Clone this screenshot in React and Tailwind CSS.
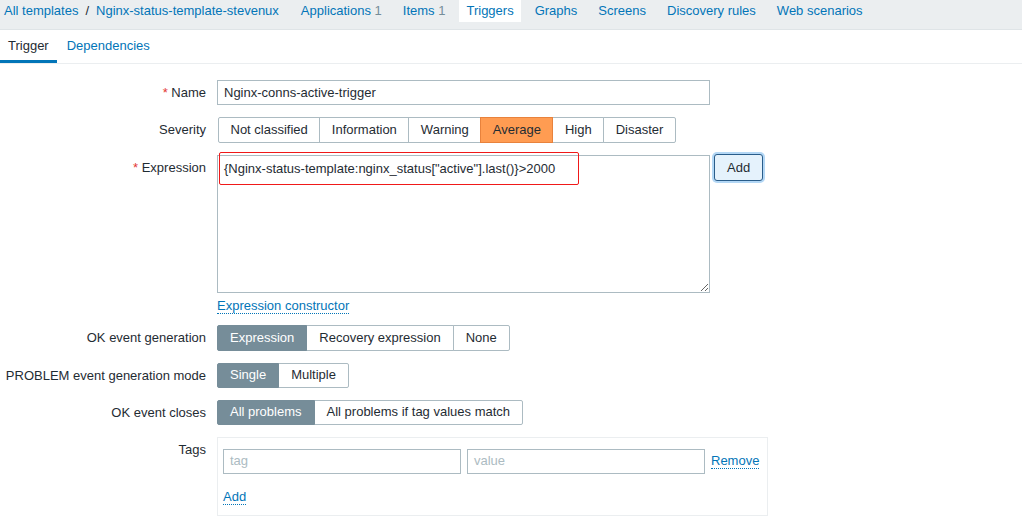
import React from "react";

const blue = "text-[#0275b8]";

function Radio({ items, selected, h = "h-[26px]", special, px = "px-[12px]" }) {
  return (
    <div className={`flex ${h}`}>
      {items.map((it, i) => {
        const sel = i === selected;
        const first = i === 0;
        const last = i === items.length - 1;
        let cls = "";
        if (sel && special) cls = "bg-[#ff9c52] border-[#e8823c] text-[#1f2c33]";
        else if (sel) cls = "bg-[#768d99] border-[#768d99] text-white";
        else cls = "bg-white border-[#acbbc2] text-[#1f2c33]";
        return (
          <div
            key={it}
            className={`flex items-center ${px} border ${cls} ${first ? "rounded-l-[2px]" : "-ml-px"} ${last ? "rounded-r-[2px]" : ""} ${sel ? "relative z-10" : ""}`}
          >
            {it}
          </div>
        );
      })}
    </div>
  );
}

function Row({ label, required, children, className = "" }) {
  return (
    <div className={`flex items-start ${className}`}>
      <div className="w-[217px] pr-[11px] text-right pt-[5px] leading-[15px] shrink-0">
        {required && <span className="text-[#e33734]">* </span>}
        {label}
      </div>
      <div>{children}</div>
    </div>
  );
}

export default function App() {
  return (
    <div className="w-[1022px] h-[517px] overflow-hidden bg-white font-['Liberation_Sans',Arial,sans-serif] text-[13px] text-[#1f2c33]">
      {/* top bar */}
      <div className="h-[30px] bg-[#ebeef0] border-b border-[#dfe4e7] flex items-start pl-[4px] leading-[22px]">
        <span className={blue}>All templates</span>
        <span className="mx-[7px] text-[#1f2c33]">/</span>
        <span className={blue}>Nginx-status-template-stevenux</span>
        <div className="flex ml-[15px] gap-[7px]">
          <div className={`px-[7px] ${blue}`}>
            Applications <span className="text-[#768d99]">1</span>
          </div>
          <div className={`px-[7px] ${blue}`}>
            Items <span className="text-[#768d99]">1</span>
          </div>
          <div className={`px-[7px] bg-white h-[22px] ${blue}`}>Triggers</div>
          <div className={`px-[7px] ${blue}`}>Graphs</div>
          <div className={`px-[7px] ${blue}`}>Screens</div>
          <div className={`px-[7px] ${blue}`}>Discovery rules</div>
          <div className={`px-[7px] ${blue}`}>Web scenarios</div>
        </div>
      </div>

      {/* sub tabs */}
      <div className="h-[34px] border-b border-[#ebeef0] flex">
        <div className="h-[33px] flex items-center px-[8px] border-b-[3px] border-[#0275b8] pt-[2px]">
          Trigger
        </div>
        <div className={`h-[33px] flex items-center px-[10px] border-b-[3px] border-transparent pt-[2px] ${blue}`}>
          Dependencies
        </div>
      </div>

      {/* form */}
      <div className="pt-[16px]">
        <Row label="Name" required>
          <div className="w-[493px] h-[25px] border border-[#acbbc2] flex items-center px-[6px]">
            Nginx-conns-active-trigger
          </div>
        </Row>

        <Row label="Severity" className="mt-[12px]">
          <div className="pl-[1px]">
            <Radio
              items={["Not classified", "Information", "Warning", "Average", "High", "Disaster"]}
              selected={3}
              special
              px="px-[11.5px]"
            />
          </div>
        </Row>

        <Row label="Expression" required className="mt-[12px]">
          <div className="flex items-start">
            <div className="relative">
              <textarea
                readOnly
                value={'{Nginx-status-template:nginx_status["active"].last()}>2000'}
                className="block w-[493px] h-[138px] border border-[#acbbc2] px-[6px] pt-[5px] text-[13px] leading-[16px] text-[#1f2c33] outline-none font-['Liberation_Sans',Arial,sans-serif]"
              />
              <div className="absolute left-[2px] top-[-3px] w-[360px] h-[33px] border-[1.5px] border-[#f01919] rounded-[2px] pointer-events-none" />
            </div>
            <div className="ml-[4px] -mt-[1px] h-[27px] px-[12px] flex items-center border border-[#2a5d8a] bg-[#e5f2fc] rounded-[3px] ring-2 ring-[#b3d7f5]">
              Add
            </div>
          </div>
          <div className="mt-[3px]">
            <span className={`${blue} leading-[14px] border-b border-dotted border-[#0275b8] inline-block`}>
              Expression constructor
            </span>
          </div>
        </Row>

        <Row label="OK event generation" className="mt-[9px]">
          <Radio items={["Expression", "Recovery expression", "None"]} selected={0} />
        </Row>

        <Row label="PROBLEM event generation mode" className="mt-[12px]">
          <Radio items={["Single", "Multiple"]} selected={0} h="h-[25px]" />
        </Row>

        <Row label="OK event closes" className="mt-[12px]">
          <Radio items={["All problems", "All problems if tag values match"]} selected={0} h="h-[25px]" />
        </Row>

        <Row label="Tags" className="mt-[12px]">
          <div className="w-[551px] h-[79px] border border-[#ebeef0] pl-[5px] pt-[11px]">
            <div className="flex items-center">
              <div className="w-[238px] h-[25px] border border-[#acbbc2] flex items-center px-[6px] text-[#acbbc2]">
                tag
              </div>
              <div className="ml-[6px] w-[238px] h-[25px] border border-[#acbbc2] flex items-center px-[6px] text-[#acbbc2]">
                value
              </div>
              <span className={`ml-[6px] ${blue} leading-[14px] border-b border-dotted border-[#0275b8]`}>Remove</span>
            </div>
            <div className="mt-[13px]">
              <span className={`${blue} leading-[14px] border-b border-dotted border-[#0275b8] inline-block`}>Add</span>
            </div>
          </div>
        </Row>
      </div>
    </div>
  );
}
